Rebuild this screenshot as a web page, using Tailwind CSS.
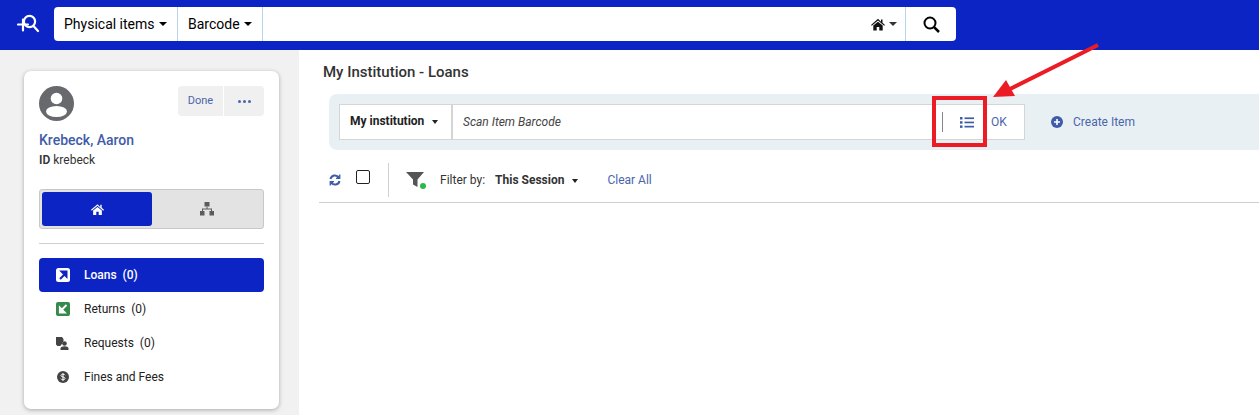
<!DOCTYPE html>
<html>
<head>
<meta charset="utf-8">
<script src="https://cdn.jsdelivr.net/npm/@tailwindcss/browser@4"></script>
</head>
<body class="relative w-[1259px] h-[415px] overflow-hidden bg-white font-['Roboto',sans-serif] text-[#222]">
<header class="h-[50px] bg-[#0d24c4] flex items-start">
  <div class="w-[54px] h-[50px] pt-[14px] pl-[17px]">
    <svg width="23" height="19" viewBox="0 0 23 19" fill="none" stroke="#fff" stroke-width="2.2" stroke-linecap="round"><circle cx="12.5" cy="7.5" r="5.6"/><path d="M16.5 12l4.500 5M1 10.500h10M6 5.500v11"/></svg>
  </div>
  <div class="mt-[7px] w-[902px] h-[34px] bg-white rounded-[4px] flex items-center text-[14px] text-black">
    <div class="w-[124px] h-full flex items-center pl-[10px] gap-[4px] border-r border-[#b5d5ea]">Physical items <span class="w-0 h-0 border-x-[4px] border-x-transparent border-t-[4px] border-t-black"></span></div>
    <div class="w-[85px] h-full flex items-center pl-[10px] gap-[4px] border-r border-[#b5d5ea]">Barcode <span class="w-0 h-0 border-x-[4px] border-x-transparent border-t-[4px] border-t-black"></span></div>
    <div class="flex-1"></div>
    <div class="w-[33px] flex items-center gap-[4px]">
      <svg width="14" height="13" viewBox="0 0 14 13"><path fill="#111" d="M7 .8 0 6.900l.8.9L7 2.500l6.200 5.300.8-.9-2.500-2.200V1.500H10v2.300zM2.300 7.600V12.500h3.400V9h2.600v3.500h3.400V7.600L7 3.700z"/></svg>
      <span class="w-0 h-0 border-x-[4px] border-x-transparent border-t-[4px] border-t-[#333]"></span>
    </div>
    <div class="w-[51px] h-full ml-[1px] flex items-center justify-center border-l border-[#b5d5ea]">
      <svg width="17" height="17" viewBox="0 0 17 17" fill="none" stroke="#000" stroke-width="2"><circle cx="7" cy="7" r="5.500"/><path d="M10.800 10.800 16 16" stroke-width="2.500"/></svg>
    </div>
  </div>
</header>
<div class="flex h-[365px]">
  <aside class="w-[299px] h-full bg-[#f1f1f1] pl-[24px] pt-[21px]">
    <div class="w-[255px] h-[338px] bg-white rounded-[7px] shadow-[0_1px_4px_rgba(0,0,0,0.3)] px-[15px] pt-[15px]">
      <div class="flex justify-between items-start h-[35px]">
        <svg width="35" height="35" viewBox="0 0 35 35"><circle cx="17.500" cy="17.500" r="17.500" fill="#68696d"/><circle cx="17.500" cy="12.500" r="5.800" fill="#fff"/><ellipse cx="17.500" cy="25.500" rx="10.500" ry="5.500" fill="#fff"/></svg>
        <div class="flex gap-[1px] text-[11px] text-[#4a66ab] h-[30px]">
          <div class="w-[45px] bg-[#f0f0f0] rounded-l-[4px] flex items-center justify-center">Done</div>
          <div class="w-[40px] bg-[#f0f0f0] rounded-r-[4px] flex items-center justify-center gap-[2px]">
            <span class="w-[3px] h-[3px] rounded-full bg-[#4a66ab]"></span><span class="w-[3px] h-[3px] rounded-full bg-[#4a66ab]"></span><span class="w-[3px] h-[3px] rounded-full bg-[#4a66ab]"></span>
          </div>
        </div>
      </div>
      <div class="mt-[10px] text-[14px] leading-[18px] font-medium text-[#3f5ca8]">Krebeck, Aaron</div>
      <div class="mt-[3px] text-[12px] leading-[16px] text-[#333]"><span class="font-semibold">ID</span> krebeck</div>
      <div class="mt-[21px] h-[40px] bg-[#e3e3e3] border border-[#c8c8c8] rounded-[3px] flex p-[2px]">
        <div class="w-[110px] bg-[#0d24c4] rounded-[3px] flex items-center justify-center">
          <svg width="13" height="13" viewBox="0 0 14 13"><path fill="#fff" d="M7 .8 0 6.900l.8.9L7 2.500l6.200 5.300.8-.9-2.500-2.200V1.500H10v2.300zM2.300 7.600V12.500h3.400V9h2.600v3.500h3.400V7.600L7 3.700z"/></svg>
        </div>
        <div class="flex-1 flex items-center justify-center">
          <svg width="14" height="14" viewBox="0 0 14 14" fill="#5c5c5c"><rect x="4.500" y="0" width="5" height="4.500"/><rect x="0" y="9" width="4.500" height="4.500"/><rect x="9.500" y="9" width="4.500" height="4.500"/><path d="M6.500 4.500h1V6.500h4.500V9h-1V7.500H3V9H2V6.500h4.500z"/></svg>
        </div>
      </div>
      <div class="mt-[14px] h-px bg-[#cfcfcf]"></div>
      <nav class="mt-[14px] text-[12px] text-[#222]">
        <div class="h-[34px] bg-[#0d24c4] rounded-[4px] flex items-center text-white font-medium">
          <span class="w-[45px] flex justify-center pl-[2px]"><svg width="14" height="14" viewBox="0 0 14 14"><rect width="14" height="14" rx="2.500" fill="#fff"/><path d="M4 11 9 6M5.500 3.500h5v5z" stroke="#0d24c4" stroke-width="2" fill="#0d24c4"/></svg></span>
          <span class="whitespace-pre">Loans  (0)</span>
        </div>
        <div class="h-[34px] flex items-center">
          <span class="w-[45px] flex justify-center pl-[2px]"><svg width="14" height="14" viewBox="0 0 14 14"><rect width="14" height="14" rx="2" fill="#35894b"/><path d="M10.500 3 6 7.500M3.800 5.500v5h5z" stroke="#fff" stroke-width="1.800" fill="#fff"/></svg></span>
          <span class="whitespace-pre">Returns  (0)</span>
        </div>
        <div class="h-[34px] flex items-center">
          <span class="w-[45px] flex justify-center pl-[2px]"><svg width="13" height="13" viewBox="0 0 13 13" fill="#444"><path d="M0 0h6l1.500 2v2.200a3 3 0 0 0-1 2.600c-1 .6-1.800 1.300-2 2.200H1.500L0 7.500z"/><circle cx="8.500" cy="6.500" r="2.300"/><path d="M4.500 13v-1.500c0-1.500 2-2.300 4-2.300s4 .8 4 2.300V13z"/></svg></span>
          <span class="whitespace-pre">Requests  (0)</span>
        </div>
        <div class="h-[34px] flex items-center">
          <span class="w-[45px] flex justify-center pl-[2px]"><svg width="12" height="12" viewBox="0 0 12 12"><circle cx="6" cy="6" r="6" fill="#444"/><path d="M8 4.200C7.700 3.500 7 3.200 6 3.200c-1.200 0-2 .5-2 1.400 0 1.900 4 .9 4 2.800 0 .9-.8 1.400-2 1.400-1 0-1.800-.4-2.100-1.100M6 2.200v7.600" stroke="#fff" fill="none" stroke-width="1"/></svg></span>
          <span>Fines and Fees</span>
        </div>
      </nav>
    </div>
  </aside>
  <main class="flex-1 pt-[13px]">
    <h1 class="pl-[24px] text-[15px] leading-[18px] font-medium text-[#333]">My Institution - Loans</h1>
    <div class="ml-[30px] mt-[13px] h-[56px] bg-[#e9f0f4] rounded-l-[8px] pl-[10px] flex items-center">
      <div class="w-[686px] h-[36px] bg-white border border-[#d5d5d5] flex items-stretch">
        <div class="w-[113px] shrink-0 border-r-2 border-[#d5d5d5] flex items-center pl-[10px] pb-[3px] text-[12px] font-bold text-[#222]">
          <span>My institution</span><span class="ml-[8px] mt-[3px] w-0 h-0 border-x-[3px] border-x-transparent border-t-[4px] border-t-[#222]"></span>
        </div>
        <div class="flex-1 flex items-center pl-[10px] text-[12px] italic text-[#444]">Scan Item Barcode</div>
        <div class="w-[1px] h-[20px] self-center bg-[#888]"></div>
        <div class="w-[48px] flex items-center justify-center">
          <svg width="14" height="11" viewBox="0 0 14 11" fill="#3f5ca8"><rect x="0" y="0" width="2.500" height="2.500"/><rect x="0" y="4.200" width="2.500" height="2.500"/><rect x="0" y="8.400" width="2.500" height="2.500"/><rect x="4.500" y=".4" width="9.500" height="1.700"/><rect x="4.500" y="4.600" width="9.500" height="1.700"/><rect x="4.500" y="8.800" width="9.500" height="1.700"/></svg>
        </div>
        <div class="w-[33px] pr-[5px] flex items-center text-[12px] text-[#4a66ab]">OK</div>
      </div>
      <div class="ml-[26px] flex items-center gap-[10px] text-[12px] text-[#4a66ab]">
        <svg width="12" height="12" viewBox="0 0 12 12"><circle cx="6" cy="6" r="6" fill="#3f5ca8"/><path d="M3 6h6M6 3v6" stroke="#fff" stroke-width="1.600"/></svg>
        <span>Create Item</span>
      </div>
    </div>
    <div class="ml-[20px] mt-[8px] h-[44px] pb-[1px] flex items-center pr-0">
      <svg class="ml-[10px]" width="12" height="12" viewBox="0 0 12 12" fill="none" stroke="#3f5ca8" stroke-width="2"><path d="M1.500 5A4.500 4.500 0 0 1 9.700 3.500M10.500 7a4.500 4.500 0 0 1-8.200 1.500"/><path d="M10.800 .6v3.800H7M1.200 11.400V7.600H5" stroke-width="1.200" fill="#3f5ca8"/></svg>
      <span class="ml-[15px] mb-[6px] w-[14px] h-[14px] border border-[#222] rounded-[2px] bg-white"></span>
      <span class="ml-[18px] w-px h-[34px] bg-[#d0d0d0]"></span>
      <span class="ml-[17px] relative w-[20px] h-[16px]">
        <svg width="18" height="15" viewBox="0 0 18 15" fill="#555"><path d="M0 0h18l-6.500 7.500V15L7 12.500V7.500z"/></svg>
        <span class="absolute right-0 bottom-[-1px] w-[6px] h-[6px] rounded-full bg-[#2eb84a]"></span>
      </span>
      <span class="ml-[14px] text-[12px] text-[#333]">Filter by:</span>
      <span class="ml-[10px] text-[12px] font-bold text-[#333]">This Session</span>
      <span class="ml-[8px] mt-[3px] w-0 h-0 border-x-[3px] border-x-transparent border-t-[4px] border-t-[#222]"></span>
      <span class="ml-[29px] text-[12px] text-[#4a66ab]">Clear All</span>
    </div>
    <div class="ml-[20px] h-px bg-[#cfcfcf]"></div>
  </main>
</div>
<svg class="absolute left-0 top-0 pointer-events-none" width="1259" height="415" viewBox="0 0 1259 415" fill="none">
  <rect x="934" y="98" width="51" height="47" stroke="#ec1c24" stroke-width="4"/>
  <path d="M1098 45 1010 89" stroke="#ec1c24" stroke-width="4"/>
  <path d="M993 97 1006 80 1015 96z" fill="#ec1c24"/>
</svg>
</body>
</html>
